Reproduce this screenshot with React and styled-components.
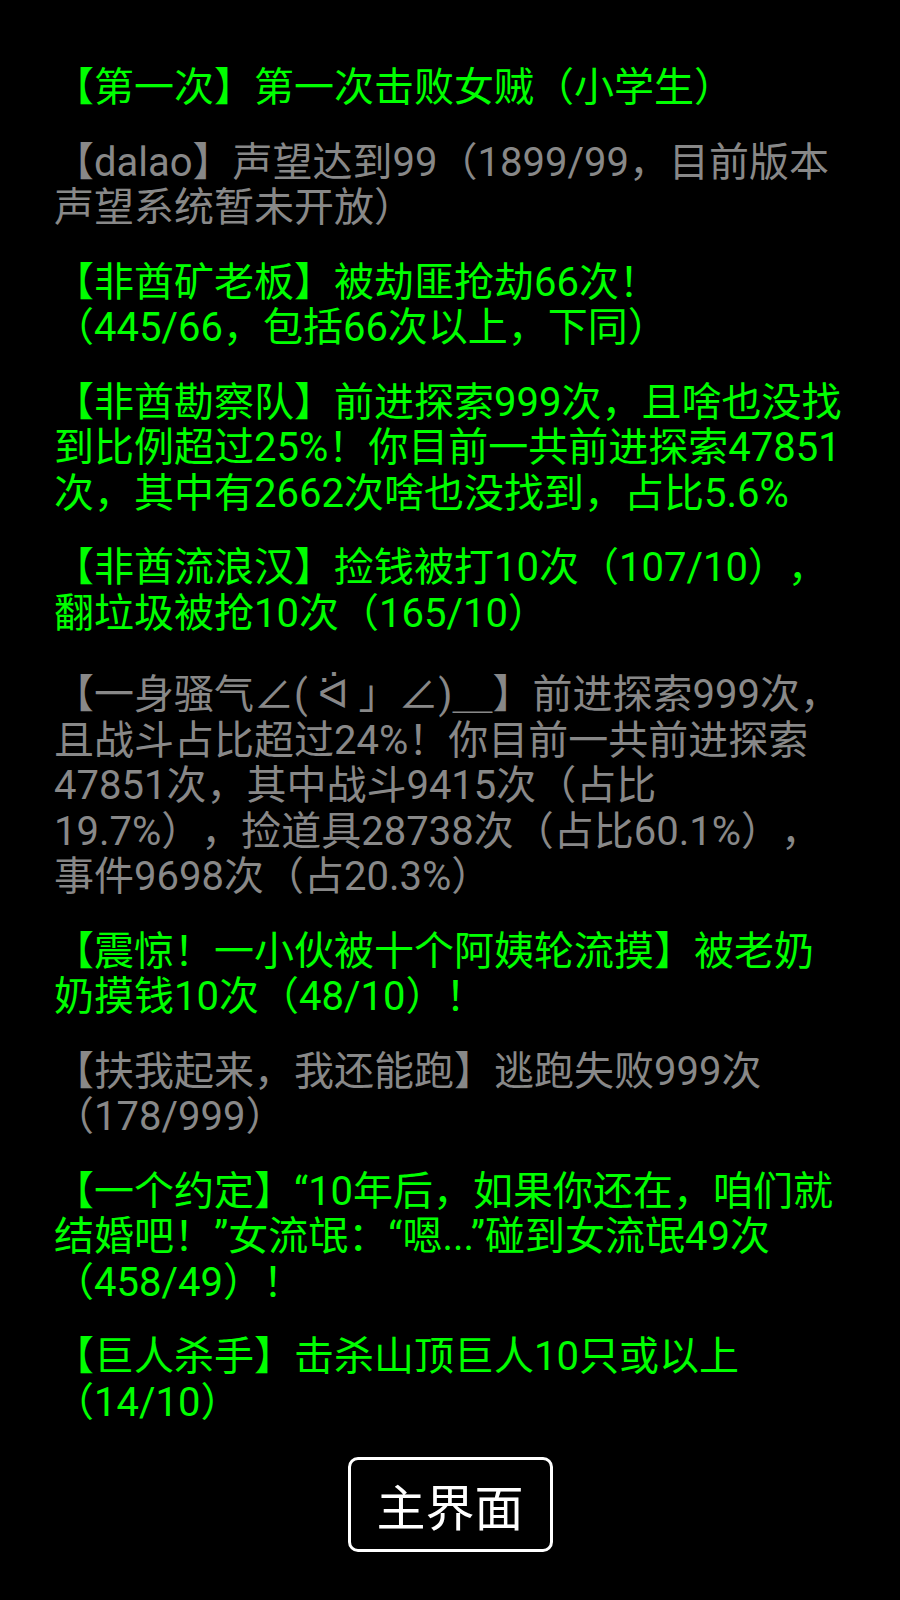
import React from "react";
import styled, { createGlobalStyle } from "styled-components";

const GlobalStyle = createGlobalStyle`
  html, body {
    margin: 0;
    padding: 0;
    background: #000;
  }
  body {
    font-family: "Roboto", "Noto Sans CJK SC", sans-serif;
  }
`;

const achievements = [
  { text: "【第一次】第一次击败女贼（小学生）", done: true },
  { text: "【dalao】声望达到99（1899/99，目前版本声望系统暂未开放）", done: false },
  { text: "【非酋矿老板】被劫匪抢劫66次！（445/66，包括66次以上，下同）", done: true },
  {
    text: "【非酋勘察队】前进探索999次，且啥也没找到比例超过25%！你目前一共前进探索47851次，其中有2662次啥也没找到，占比5.6%",
    done: true,
  },
  { text: "【非酋流浪汉】捡钱被打10次（107/10），翻垃圾被抢10次（165/10）", done: true },
  {
    text: "【一身骚气∠( ᐛ 」∠)＿】前进探索999次，且战斗占比超过24%！你目前一共前进探索47851次，其中战斗9415次（占比19.7%），捡道具28738次（占比60.1%），事件9698次（占20.3%）",
    done: false,
    tall: true,
  },
  { text: "【震惊！一小伙被十个阿姨轮流摸】被老奶奶摸钱10次（48/10）！", done: true },
  { text: "【扶我起来，我还能跑】逃跑失败999次（178/999）", done: false },
  {
    text: "【一个约定】“10年后，如果你还在，咱们就结婚吧！”女流氓：“嗯...”碰到女流氓49次（458/49）！",
    done: true,
  },
  { text: "【巨人杀手】击杀山顶巨人10只或以上（14/10）", done: true },
];

const Screen = styled.div`
  width: 900px;
  min-height: 1600px;
  box-sizing: border-box;
  background: #000;
  padding: 65px 58px 0 54px;
  display: flex;
  flex-direction: column;
`;

const List = styled.div`
  display: flex;
  flex-direction: column;
  gap: 29px;
`;

const Item = styled.p`
  margin: 0;
  padding-top: ${(p) => (p.$tall ? "7px" : "0")};
  font-size: 40px;
  line-height: 45.5px;
  color: ${(p) => (p.$done ? "#00ff00" : "#888888")};
  text-spacing-trim: space-all;
  word-break: normal;
`;

const Footer = styled.div`
  display: flex;
  justify-content: center;
  padding-top: 32px;
  padding-left: 4px;
`;

const HomeButton = styled.button`
  width: 205px;
  height: 95px;
  box-sizing: border-box;
  border: 3.5px solid #fff;
  border-radius: 10px;
  background: #000;
  color: #fff;
  font-family: "Roboto", "Noto Sans CJK SC", sans-serif;
  font-size: 49px;
  padding: 0;
  display: flex;
  align-items: center;
  justify-content: center;
  cursor: pointer;
`;

export default function App() {
  return (
    <>
      <GlobalStyle />
      <Screen>
        <List>
          {achievements.map((a, i) => (
            <Item key={i} $done={a.done} $tall={a.tall}>
              {a.text}
            </Item>
          ))}
        </List>
        <Footer>
          <HomeButton>主界面</HomeButton>
        </Footer>
      </Screen>
    </>
  );
}
